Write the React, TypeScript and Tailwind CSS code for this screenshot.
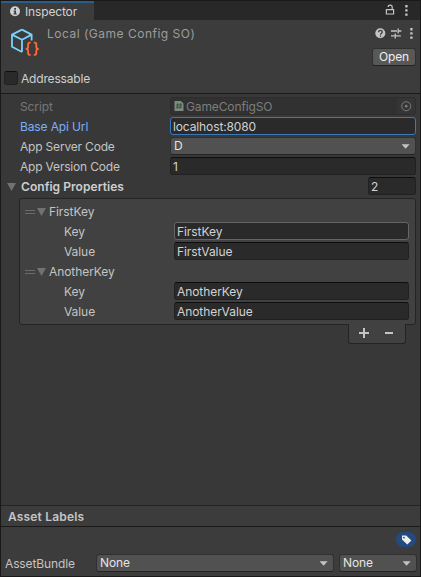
import React from "react";

const plain = "border-[#212121] border-t-[#0d0d0d]";
const focused = "border-[#3a79bb]";
const hovered = "border-[#656565]";

function Field({ className = "", edge = plain, children }: { className?: string; edge?: string; children?: React.ReactNode }) {
  return (
    <div className={`h-[18px] rounded-[3px] border bg-[#2a2a2a] pl-[2px] leading-[17px] text-[#d2d2d2] ${edge} ${className}`}>
      {children}
    </div>
  );
}

function Arrow({ className = "" }: { className?: string }) {
  return (
    <svg className={className} width="9" height="5" viewBox="0 0 9 5">
      <path d="M0.6 0.3h8L4.6 4.8z" fill="#c4c4c4" />
    </svg>
  );
}

function Dropdown({ className = "", children }: { className?: string; children?: React.ReactNode }) {
  return (
    <div className={`flex h-[18px] items-center justify-between rounded-[3px] border border-[#303030] border-b-[#242424] bg-[#515151] pl-[3px] pr-[5px] leading-4 text-[#e4e4e4] ${className}`}>
      <span>{children}</span>
      <Arrow />
    </div>
  );
}

function Foldout({ className = "" }: { className?: string }) {
  return (
    <svg width="9" height="8" viewBox="0 0 9 8" className={`shrink-0 ${className}`}>
      <path d="M0 0h9L4.5 8z" fill="#717171" />
    </svg>
  );
}

function Dots() {
  return (
    <svg width="3" height="11" viewBox="0 0 3 11" fill="#c4c4c4" className="shrink-0">
      <rect x="0.2" y="0" width="2.4" height="2.4" rx="0.4" />
      <rect x="0.2" y="4.2" width="2.4" height="2.4" rx="0.4" />
      <rect x="0.2" y="8.4" width="2.4" height="2.4" rx="0.4" />
    </svg>
  );
}

function Row({ label, labelClass = "tracking-[-0.19px]", children }: { label: string; labelClass?: string; children: React.ReactNode }) {
  return (
    <div className="flex h-[18px] pl-[19px] pr-1">
      <div className={`w-[150px] shrink-0 leading-[19px] ${labelClass}`}>{label}</div>
      {children}
    </div>
  );
}

function Item({ name, k, v, edge }: { name: string; k: string; v: string; edge?: string }) {
  return (
    <div className="h-[60px]">
      <div className="flex h-5 items-center pl-[5px]">
        <div className="h-1 w-[10px] border-y border-[#6b6b6b]" />
        <Foldout className="ml-[2px]" />
        <span className="ml-[3px] leading-5">{name}</span>
      </div>
      <div className="flex h-5 pl-11 pr-[6px]">
        <span className="w-[110px] leading-[19px]">Key</span>
        <Field className="flex-1" edge={edge}>{k}</Field>
      </div>
      <div className="flex h-5 pl-11 pr-[6px]">
        <span className="w-[110px] leading-[19px]">Value</span>
        <Field className="flex-1">{v}</Field>
      </div>
    </div>
  );
}

export default function App() {
  return (
    <div className="flex h-[577px] w-[421px] flex-col overflow-hidden border border-[#191919] bg-[#383838] font-['Inter','Liberation_Sans',sans-serif] text-[12px] tracking-[-0.07px] whitespace-nowrap text-[#c4c4c4]">
      <div className="flex h-[19px] shrink-0 bg-[#282828]">
        <div className="flex h-[19px] w-[93px] items-start border-t-2 border-[#2c5d87] bg-[#3c3c3c] pl-[9px]">
          <svg width="11" height="11" viewBox="0 0 11 11" className="mt-[3px]">
            <circle cx="5" cy="5.3" r="5" fill="#d0d0d0" />
            <path d="M4.2 2H6v1.7H4.2zM3.5 4.6H6v3h.8v1H3.4v-1h.9V5.5h-.8z" fill="#3c3c3c" />
          </svg>
          <span className="ml-1 leading-[18px] tracking-[-0.15px] text-[#d2d2d2]">Inspector</span>
        </div>
        <div className="flex-1" />
        <svg width="10" height="11" viewBox="0 0 10 11" className="mt-[3px]" fill="none" stroke="#c4c4c4" strokeWidth="1.2">
          <path d="M1.4 5.6h7.2v4.4H1.4zM7.2 5.3V3.1C7.2 1.7 6.4 1.2 5.2 1.2S3.2 1.8 3.2 3" />
        </svg>
        <div className="ml-[10px] mr-[12px] mt-1"><Dots /></div>
      </div>

      <div className="h-[74px] shrink-0 border-b border-[#1a1a1a] bg-[#3c3c3c]">
        <div className="flex h-[46px]">
          <svg width="30" height="30" viewBox="0 0 30 30" className="ml-[9px] mt-[7px] shrink-0" fill="none">
            <path d="M12 2.6L21.6 7.6v5.8M12 2.6L2 7.6v12.2L12 25M2 7.6l10 5.2L21.6 7.6M12 12.8V25" stroke="#79d3fb" strokeWidth="1.8" strokeLinejoin="round" />
            <path d="M20.6 15.6h-.9q-1.6 0-1.6 1.7v2.6q0 1.8-2.4 1.9q2.4.1 2.4 1.9v2.4q0 1.7 1.6 1.7h.9M23.8 15.6h.9q1.6 0 1.6 1.7v2.6q0 1.8 2.4 1.9q-2.4.1-2.4 1.9v2.4q0 1.7-1.6 1.7h-.9" stroke="#ff6b3d" strokeWidth="1.8" />
          </svg>
          <span className="ml-[7px] mt-[4px] leading-5 tracking-[0.5px] text-[#9c9c9c]">Local (Game Config SO)</span>
          <div className="ml-auto mr-1 flex w-[44px] flex-col items-end">
            <div className="mt-2 flex h-[11px] items-center pr-[3px]">
              <svg width="11" height="11" viewBox="0 0 11 11" className="shrink-0">
                <circle cx="5.3" cy="5.3" r="5" fill="#c4c4c4" />
                <path d="M3.6 4.2c0-2.5 3.7-2.3 3.7-.2 0 1.3-1.8 1.2-1.8 2.7M5.5 7.5v1.3" fill="none" stroke="#3c3c3c" strokeWidth="1.3" />
              </svg>
              <svg width="11" height="11" viewBox="0 0 11 11" className="ml-[5px] shrink-0" stroke="#c4c4c4" strokeWidth="1.3" fill="none">
                <path d="M0 3h6M7.2.5v5M7.2 3h3.2M0 7.8h3.4M4.2 5.4v5M4.2 7.8h5.6" />
              </svg>
              <div className="ml-[8px]"><Dots /></div>
            </div>
            <button className="mt-[9px] h-[18px] w-[44px] shrink-0 rounded-[3px] border border-[#303030] border-b-[#242424] bg-[#585858] text-center leading-4 tracking-[-0.1px] text-[#eeeeee]">Open</button>
          </div>
        </div>
        <div className="flex pl-[3px] pt-[4px]">
          <div className="h-[14px] w-[14px] mt-px rounded-[3px] border border-[#212121] border-t-[#0d0d0d] bg-[#2a2a2a]" />
          <span className="ml-[3px] leading-[18px] tracking-[-0.17px] text-[#d0d0d0]">Addressable</span>
        </div>
      </div>

      <div className="flex shrink-0 flex-col gap-[2px] pt-[3px]">
        <Row label="Script" labelClass="tracking-[-0.1px] text-[#777777]">
          <div className="flex h-[18px] flex-1 items-center rounded-[3px] border border-[#2d2d2d] bg-[#313131] pl-[3px] text-[#7d7d7d]">
            <svg width="10" height="12" viewBox="0 0 10 12" className="shrink-0">
              <path d="M0.5 1h6.3L9.5 3.6V11h-9z" fill="#808880" />
              <path d="M3.9 3.2L3.2 8.8M6.7 3.2L6 8.8M2.2 4.9h6M2 7.2h6" stroke="#315b3d" strokeWidth="1" />
            </svg>
            <span className="ml-[2px] flex-1 pt-px leading-4 tracking-[-0.12px]">GameConfigSO</span>
            <div className="flex h-4 w-[18px] items-center justify-center rounded-r-[2px] bg-[#353535]">
              <svg width="11" height="11" viewBox="0 0 11 11">
                <circle cx="5.2" cy="5.2" r="4.5" fill="none" stroke="#7b7b7b" />
                <circle cx="5.2" cy="5.2" r="1.4" fill="#7b7b7b" />
              </svg>
            </div>
          </div>
        </Row>
        <Row label="Base Api Url" labelClass="tracking-[-0.13px] text-[#7baefa]">
          <Field className="flex-1 tracking-[-0.12px]" edge={focused}>localhost:8080</Field>
        </Row>
        <Row label="App Server Code"><Dropdown className="flex-1">D</Dropdown></Row>
        <Row label="App Version Code"><Field className="flex-1">1</Field></Row>
        <div className="flex h-[18px] pl-[6px] pr-1">
          <Foldout className="mt-[6px]" />
          <span className="ml-[5px] flex-1 font-semibold leading-[19px] tracking-[0.05px] text-[#cecece]">Config Properties</span>
          <Field className="w-12">2</Field>
        </div>
      </div>

      <div className="ml-[18px] mr-1 mt-[3px] h-[127px] shrink-0 rounded-[3px] border border-[#242424] bg-[#414141] pt-[3px]">
        <Item name="FirstKey" k="FirstKey" v="FirstValue" edge={hovered} />
        <Item name="AnotherKey" k="AnotherKey" v="AnotherValue" />
      </div>
      <div className="relative -mt-px ml-auto mr-[14px] flex h-5 w-[58px] shrink-0 items-center rounded-b-[3px] border border-t-0 border-[#242424] bg-[#414141] pb-px pl-[10px]">
        <svg width="10" height="10" viewBox="0 0 10 10" stroke="#c4c4c4" strokeWidth="2"><path d="M0 5h10M5 0v10" /></svg>
        <svg width="8" height="10" viewBox="0 0 8 10" stroke="#c4c4c4" strokeWidth="2" className="ml-4"><path d="M0 5h8" /></svg>
      </div>

      <div className="mt-auto shrink-0 border-t border-[#242424] bg-[#3c3c3c]">
        <div className="h-[21px] border-b border-[#1a1a1a] pl-[7px] font-semibold leading-[21px] tracking-[0.17px]">Asset Labels</div>
        <div className="flex h-[27px] justify-end pr-1 pt-[5px]">
          <div className="flex h-[15px] w-5 items-center justify-center rounded-full bg-[#234b82]">
            <svg width="11" height="10" viewBox="0 0 11 10">
              <path d="M1 .5h4.2L10.4 5.5 6.3 9.6 1 4.6z" fill="#eeeeee" />
              <circle cx="3" cy="2.6" r="0.9" fill="#234b82" />
            </svg>
          </div>
        </div>
        <div className="flex h-[22px] pl-1 pr-[3px]">
          <span className="w-[91px] leading-[20px] tracking-[-0.12px]">AssetBundle</span>
          <Dropdown className="w-[238px]">None</Dropdown>
          <Dropdown className="ml-[5px] w-[78px]">None</Dropdown>
        </div>
      </div>
    </div>
  );
}
